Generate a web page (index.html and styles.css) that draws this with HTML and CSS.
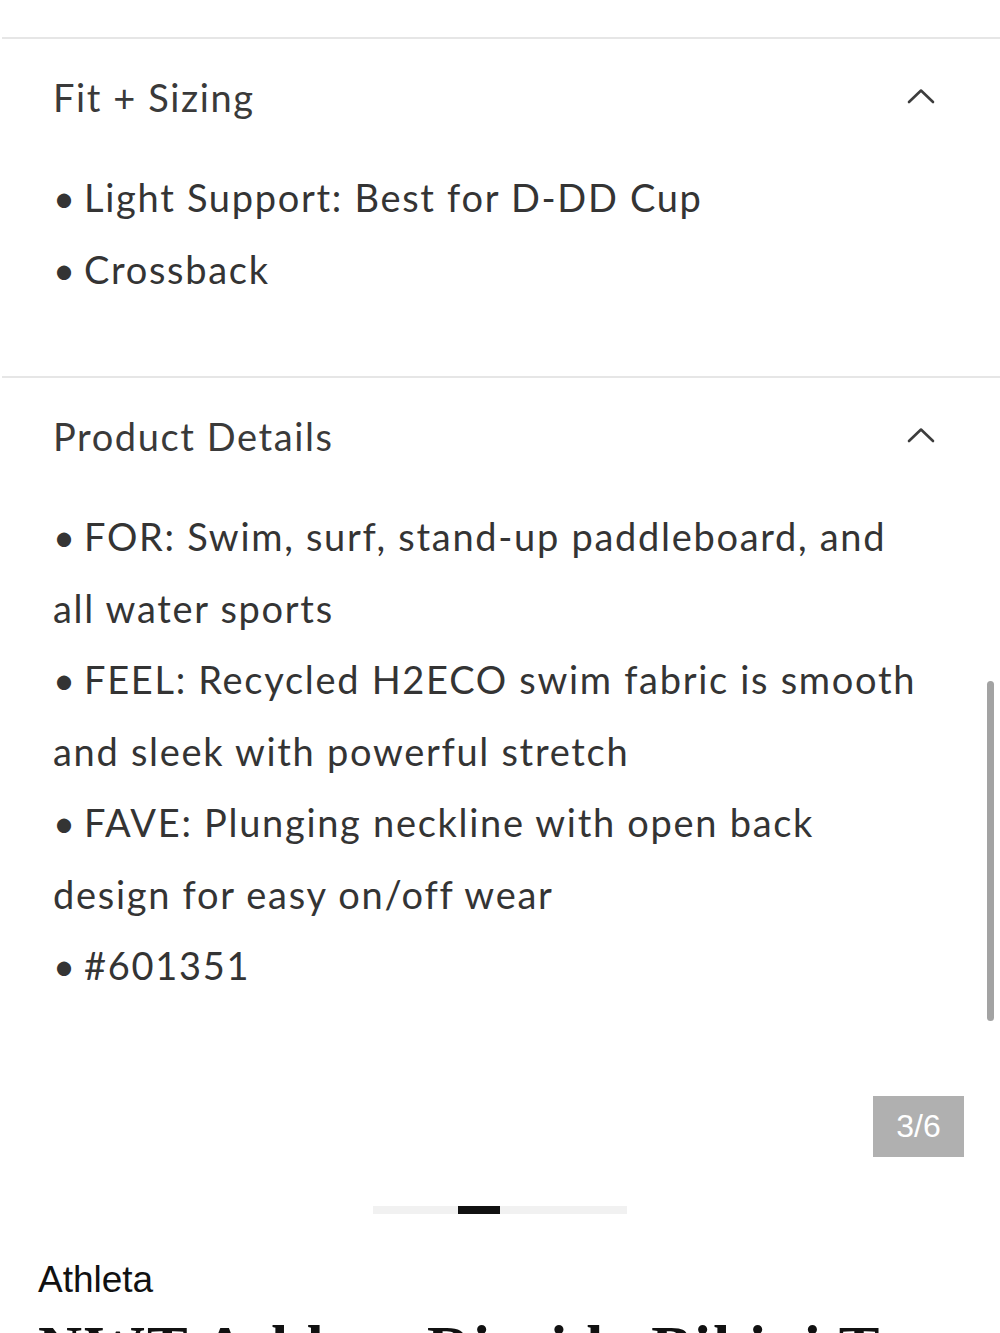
FILE: index.html
```html
<!DOCTYPE html>
<html lang="en">
<head>
<meta charset="utf-8">
<title>Athleta product details</title>
<link rel="stylesheet" href="styles.css">
</head>
<body>
<div class="page">
  <div class="top-space"></div>

  <section class="acc">
    <div class="acc-head">
      <h2 class="acc-title">Fit + Sizing</h2>
      <svg class="chev" width="28" height="16" viewBox="0 0 28 16"><polyline points="2,14 14,2.5 26,14" fill="none" stroke="#3d3d3d" stroke-width="2.6" stroke-linecap="round" stroke-linejoin="round"/></svg>
    </div>
    <div class="acc-body">
      <p class="item">Light Support: Best for D-DD Cup</p>
      <p class="item">Crossback</p>
    </div>
  </section>

  <section class="acc last">
    <div class="acc-head">
      <h2 class="acc-title">Product Details</h2>
      <svg class="chev" width="28" height="16" viewBox="0 0 28 16"><polyline points="2,14 14,2.5 26,14" fill="none" stroke="#3d3d3d" stroke-width="2.6" stroke-linecap="round" stroke-linejoin="round"/></svg>
    </div>
    <div class="acc-body details">
      <p class="item">FOR: Swim, surf, stand-up paddleboard, and all water sports</p>
      <p class="item">FEEL: Recycled H2ECO swim fabric is smooth and sleek with powerful stretch</p>
      <p class="item">FAVE: Plunging neckline with open back design for easy on/off wear</p>
      <p class="item">#601351</p>
    </div>
    <div class="scrollbar"></div>
  </section>

  <div class="counter-row">
    <div class="counter">3/6</div>
  </div>

  <div class="pager">
    <div class="pager-track">
      <div class="pager-thumb"></div>
    </div>
  </div>

  <div class="brand">Athleta</div>
  <h1 class="title">NWT Athleta Riptide Bikini Top</h1>
</div>
</body>
</html>
```

FILE: styles.css
```css
html, body {
  margin: 0;
  padding: 0;
  background: #ffffff;
}

.page {
  width: 1000px;
  height: 1333px;
  overflow: hidden;
  position: relative;
  font-family: Lato, "Open Sans", sans-serif;
  color: #343434;
}

.top-space {
  height: 37px;
}

.acc {
  border-top: 2px solid #e6e6e6;
  margin-left: 2px;
  padding: 33px 65px 71px 51px;
  position: relative;
}

.acc.last {
  padding-bottom: 0;
}

.acc-head {
  display: flex;
  align-items: center;
  justify-content: space-between;
  height: 50px;
}

.acc-title {
  margin: 0;
  font-weight: 400;
  font-size: 38px;
  line-height: 50px;
  letter-spacing: 1.6px;
  color: #3a3a3a;
}

.chev {
  margin-right: 0;
  margin-top: -2px;
}

.acc-body {
  margin-top: 40px;
  font-size: 38px;
  line-height: 71.5px;
  letter-spacing: 1.7px;
}

.acc-body p {
  margin: 0;
}

.item::before {
  content: "•";
  display: inline-block;
  width: 31px;
  letter-spacing: 0;
}

.scrollbar {
  position: absolute;
  right: 6px;
  top: 303px;
  width: 7px;
  height: 340px;
  border-radius: 4px;
  background: #a3a3a3;
}

.counter-row {
  display: flex;
  justify-content: flex-end;
  padding-right: 36px;
  margin-top: 94px;
}

.counter {
  width: 91px;
  height: 61px;
  background: #b0b0b0;
  color: #ffffff;
  font-family: "Liberation Sans", Arial, sans-serif;
  font-size: 32px;
  line-height: 61px;
  text-align: center;
}

.pager {
  display: flex;
  justify-content: center;
  margin-top: 49px;
  padding-right: 1px;
}

.pager-track {
  width: 254px;
  height: 8px;
  background: #f1f1f1;
  display: flex;
  padding-left: 85px;
  box-sizing: border-box;
}

.pager-thumb {
  width: 42px;
  height: 8px;
  background: #111111;
}

.brand {
  margin-top: 44px;
  padding-left: 38px;
  font-family: "Liberation Sans", Arial, sans-serif;
  font-size: 37px;
  line-height: 44px;
  color: #111111;
}

.title {
  margin: 11px 0 0 0;
  padding-left: 38px;
  font-family: "Liberation Serif", "Times New Roman", serif;
  font-weight: 700;
  font-size: 61px;
  line-height: 70px;
  letter-spacing: 2px;
  color: #111111;
  white-space: nowrap;
}
```
